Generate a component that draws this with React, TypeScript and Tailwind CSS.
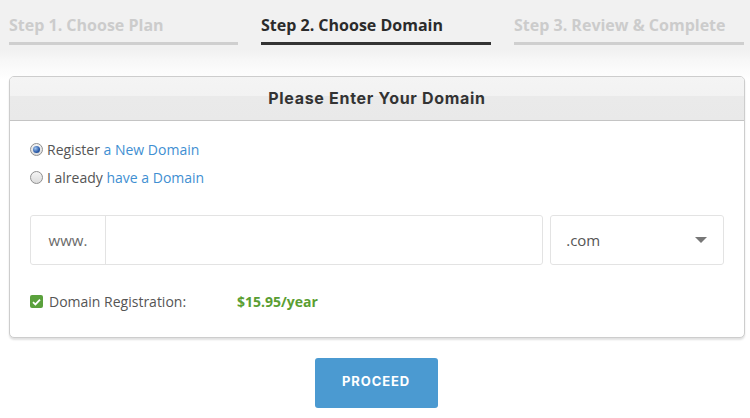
import React from "react";

function Radio({ checked }: { checked?: boolean }) {
  return (
    <span className="relative inline-flex h-[13px] w-[13px] shrink-0 items-center justify-center rounded-full border border-[#8f8f8f] bg-[linear-gradient(#f4f4f4,#dcdcdc)]">
      {checked && (
        <span className="h-[7px] w-[7px] rounded-full bg-[radial-gradient(circle_at_35%_35%,#9fc4ef,#2a5aa8_60%,#1c3f7c)]" />
      )}
    </span>
  );
}

export default function App() {
  const font = { fontFamily: '"Open Sans", "Noto Sans", sans-serif' };
  return (
    <div
      className="h-[418px] w-[750px] overflow-hidden bg-white bg-[linear-gradient(to_bottom,#f1f1f1_0px,#f1f1f1_50px,#f7f7f7_60px,#fbfbfb_70px,#ffffff_80px)]"
      style={font}
    >
      <div className="flex gap-[23px] pl-[9px] pr-[6px] pt-[14px]">
        <div className="flex h-[31px] w-[229px] items-start border-b-[3px] border-[#cfcfcf] text-[16px] font-bold leading-[22px] text-[#cccccc]">
          Step 1. Choose Plan
        </div>
        <div className="flex h-[31px] w-[230px] items-start border-b-[3px] border-[#333333] text-[16px] font-bold leading-[22px] text-[#2b2b2b]">
          Step 2. Choose Domain
        </div>
        <div className="flex h-[31px] w-[230px] items-start border-b-[3px] border-[#cfcfcf] text-[16px] font-bold leading-[22px] text-[#cccccc]">
          Step 3. Review &amp; Complete
        </div>
      </div>

      <div className="ml-[9px] mt-[31px] w-[736px] overflow-hidden rounded-[5px] border border-[#cdcdcd] bg-white shadow-[0_2px_2px_rgba(0,0,0,0.12)]">
        <div
          className="flex h-[44px] items-center justify-center border-b border-[#c4c4c4] bg-[linear-gradient(#f4f4f4_0%,#f2f2f2_45%,#eaeaea_45%,#e9e9e9_100%)] pb-[2px] text-[16px] font-bold tracking-[0.7px] text-[#333333]"
          style={{ fontFamily: 'Inter, "Open Sans", sans-serif' }}
        >
          Please Enter Your Domain
        </div>
        <div className="px-[20px] pb-[25px] pt-[17px]">
          <div className="flex h-[22px] items-center gap-[4px] text-[14px] text-[#555555]">
            <Radio checked />
            <span>
              Register <span className="text-[#3f8fd2]">a New Domain</span>
            </span>
          </div>
          <div className="mt-[6px] flex h-[22px] items-center gap-[4px] text-[14px] text-[#555555]">
            <Radio />
            <span>
              I already <span className="text-[#3f8fd2]">have a Domain</span>
            </span>
          </div>

          <div className="mt-[27px] flex gap-[7px]">
            <div className="flex h-[50px] w-[514px] rounded-[3px] border border-[#e3e3e3]">
              <div className="flex w-[75px] items-center justify-center border-r border-[#e3e3e3] text-[15px] text-[#6a6a6a]">
                www.
              </div>
              <div className="flex-1" />
            </div>
            <div className="flex h-[50px] w-[174px] items-center justify-between rounded-[3px] border border-[#e3e3e3] pl-[15px] pr-[16px] text-[15px] text-[#555555]">
              <span>.com</span>
              <span className="h-0 w-0 border-x-[6px] border-t-[6px] border-x-transparent border-t-[#777777]" />
            </div>
          </div>

          <div className="mt-[26px] flex items-center text-[14px] text-[#555555]">
            <span className="flex h-[13px] w-[13px] items-center justify-center rounded-[2px] bg-[#5aa13c]">
              <svg width="9" height="8" viewBox="0 0 9 8">
                <path d="M1 4.2 L3.4 6.4 L8 1.6" fill="none" stroke="white" strokeWidth="1.8" />
              </svg>
            </span>
            <span className="ml-[6px] w-[188px]">Domain Registration:</span>
            <span className="font-bold text-[#5a9e32]">$15.95/year</span>
          </div>
        </div>
      </div>

      <div className="mt-[20px] flex justify-center pl-[2px]">
        <div
          className="flex h-[50px] w-[123px] items-center justify-center rounded-[3px] bg-[#4b9ad1] pb-[2px] text-[13px] font-bold tracking-[0.9px] text-white"
          style={{ fontFamily: 'Inter, "Open Sans", sans-serif' }}
        >
          PROCEED
        </div>
      </div>
    </div>
  );
}
